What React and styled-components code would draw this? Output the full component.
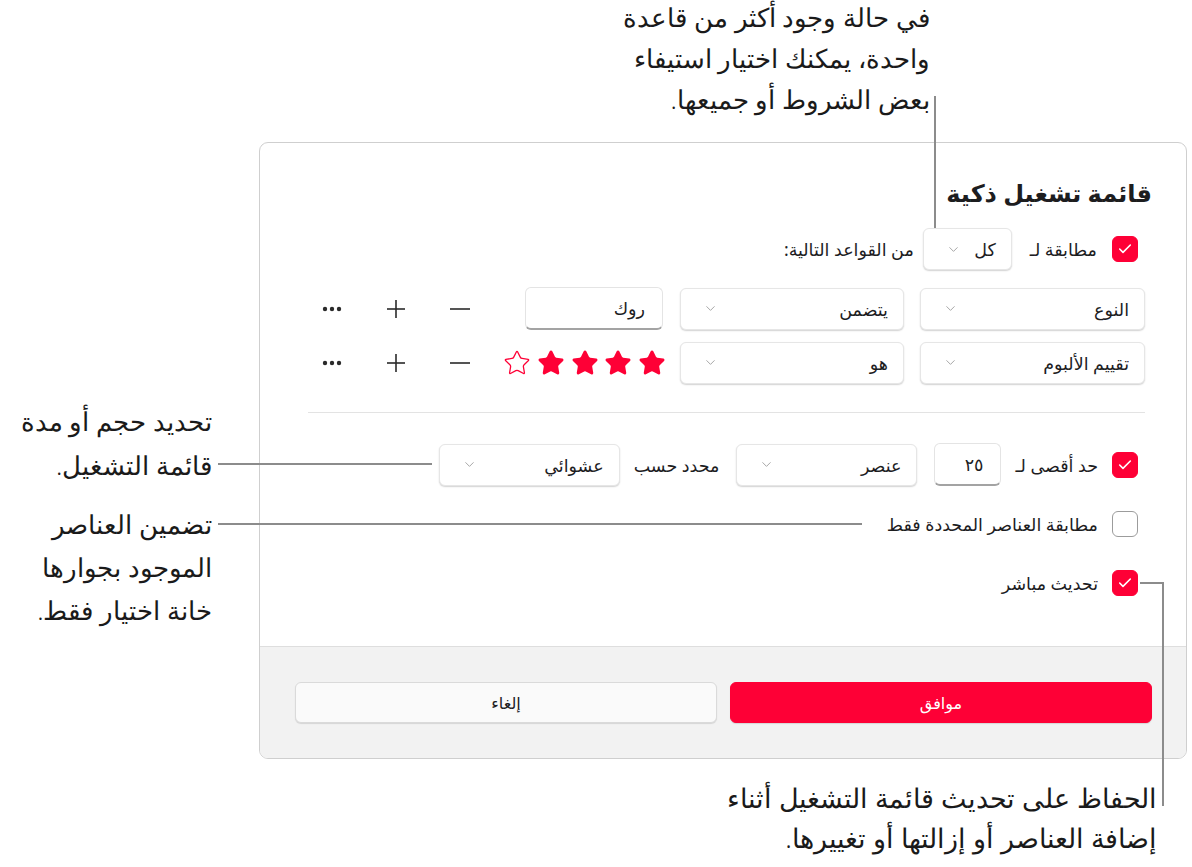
import styled, { createGlobalStyle } from "styled-components";
import { ChevronDown, Check, Star } from "lucide-react";

const GlobalStyle = createGlobalStyle`
  html, body {
    margin: 0;
    padding: 0;
    background: #ffffff;
  }
  body {
    font-family: "Noto Sans", "DejaVu Sans", sans-serif;
    color: #1d1d1f;
  }
`;

const RED = "#fe0036";

const Page = styled.div`
  position: relative;
  width: 1192px;
  height: 867px;
  overflow: hidden;
  padding-top: 142px;
  box-sizing: border-box;
`;

const Dialog = styled.div`
  direction: rtl;
  margin-left: 259px;
  width: 928px;
  height: 617px;
  box-sizing: border-box;
  border: 1px solid #cfcfcf;
  border-radius: 9px;
  background: #fff;
  display: flex;
  flex-direction: column;
  overflow: hidden;
`;

const Body = styled.div`
  flex: 1;
  padding: 34px 34px 0 48px;
  display: flex;
  flex-direction: column;
`;

const Title = styled.h1`
  margin: 0;
  font-size: 24px;
  line-height: 32px;
  font-weight: 700;
  color: #1d1d1f;
`;

const Row = styled.div`
  display: flex;
  align-items: center;
  height: ${({ h }) => h || 43}px;
  margin-top: ${({ mt }) => mt || 0}px;
  padding-right: ${({ pr }) => pr || 0}px;
`;

const Box = styled.span`
  width: 26px;
  height: 26px;
  box-sizing: border-box;
  border-radius: 6px;
  display: inline-flex;
  align-items: center;
  justify-content: center;
  flex-shrink: 0;
  background: ${({ checked }) => (checked ? RED : "#fff")};
  border: 1px solid ${({ checked }) => (checked ? RED : "#9c9c9c")};
`;

const Label = styled.span`
  font-size: 17.5px;
  color: #1d1d1f;
  white-space: nowrap;
  margin-right: ${({ mr }) => mr || 0}px;
`;

const Select = styled.div`
  width: ${({ w }) => w}px;
  height: ${({ h }) => h || 42}px;
  box-sizing: border-box;
  margin-right: ${({ mr }) => mr || 0}px;
  background: #fff;
  border: 1px solid #e6e6e6;
  border-radius: 6px;
  box-shadow: 0 1px 1.5px rgba(0, 0, 0, 0.18);
  display: flex;
  align-items: center;
  justify-content: space-between;
  padding: 0 15px 0 22px;
  font-size: 17.5px;
  color: #1d1d1f;
  flex-shrink: 0;
  svg {
    color: #9a9a9a;
  }
`;

const Field = styled.div`
  width: ${({ w }) => w}px;
  height: 43px;
  box-sizing: border-box;
  margin-right: ${({ mr }) => mr || 0}px;
  background: #fff;
  border: 1px solid #e4e4e4;
  border-bottom: 2px solid #a3a3a3;
  border-radius: 6px;
  display: flex;
  align-items: center;
  padding: 0 17px;
  font-size: 17.5px;
  color: #1d1d1f;
  flex-shrink: 0;
`;

const Stars = styled.div`
  width: 141px;
  margin-right: 14px;
  display: flex;
  gap: 5.7px;
  align-items: center;
  flex-shrink: 0;
  svg {
    flex-shrink: 0;
  }
`;

const Actions = styled.div`
  display: flex;
  align-items: center;
  gap: 24px;
  margin-right: 45px;
`;

const IconButton = styled.span`
  width: 40px;
  height: 40px;
  display: inline-flex;
  align-items: center;
  justify-content: center;
  color: #2a2a2a;
`;

const Divider = styled.div`
  height: 1px;
  background: #e3e3e3;
  margin: 28px 7px 0 0;
`;

const Footer = styled.div`
  height: 112px;
  box-sizing: border-box;
  background: #f2f2f2;
  border-top: 1px solid #dedede;
  display: flex;
  align-items: center;
  gap: 13px;
  padding: 0 34px 0 35px;
`;

const Button = styled.div`
  flex: 1;
  height: 41px;
  box-sizing: border-box;
  border-radius: 6px;
  display: flex;
  align-items: center;
  justify-content: center;
  font-size: 16px;
  background: ${({ primary }) => (primary ? RED : "#fafafa")};
  color: ${({ primary }) => (primary ? "#fff" : "#1d1d1f")};
  border: 1px solid ${({ primary }) => (primary ? RED : "#dadada")};
  box-shadow: 0 1px 1px rgba(0, 0, 0, 0.12);
`;

const Note = styled.div`
  position: absolute;
  direction: rtl;
  text-align: right;
  right: ${({ right }) => right}px;
  top: ${({ top }) => top}px;
  font-size: ${({ fs }) => fs || 26}px;
  line-height: ${({ lh }) => lh || 41}px;
  color: #1a1a1a;
  white-space: nowrap;
  font-weight: 300;
`;

const Line = styled.div`
  position: absolute;
  background: #8c8c8c;
  left: ${({ x }) => x}px;
  top: ${({ y }) => y}px;
  width: ${({ w }) => w}px;
  height: ${({ h }) => h}px;
`;

function CheckBox({ checked }) {
  return (
    <Box checked={checked}>
      {checked && <Check size={16} color="#fff" strokeWidth={2.4} />}
    </Box>
  );
}

function Dropdown({ w, mr, children }) {
  return (
    <Select w={w} mr={mr}>
      <span>{children}</span>
      <ChevronDown size={15} strokeWidth={1.4} />
    </Select>
  );
}

function MinusIcon() {
  return (
    <svg width="24" height="24" viewBox="0 0 24 24">
      <line x1="2" y1="12" x2="22" y2="12" stroke="currentColor" strokeWidth="1.6" />
    </svg>
  );
}

function PlusIcon() {
  return (
    <svg width="24" height="24" viewBox="0 0 24 24">
      <line x1="3" y1="12" x2="21" y2="12" stroke="currentColor" strokeWidth="1.6" />
      <line x1="12" y1="3" x2="12" y2="21" stroke="currentColor" strokeWidth="1.6" />
    </svg>
  );
}

function DotsIcon() {
  return (
    <svg width="24" height="24" viewBox="0 0 24 24">
      <circle cx="5" cy="12" r="2.2" fill="currentColor" />
      <circle cx="12" cy="12" r="2.2" fill="currentColor" />
      <circle cx="19" cy="12" r="2.2" fill="currentColor" />
    </svg>
  );
}

function RowActions() {
  return (
    <Actions>
      <IconButton><MinusIcon /></IconButton>
      <IconButton><PlusIcon /></IconButton>
      <IconButton><DotsIcon /></IconButton>
    </Actions>
  );
}

export default function App() {
  const rating = 4;
  return (
    <Page>
      <GlobalStyle />
      <Dialog>
        <Body>
          <Title>قائمة تشغيل ذكية</Title>

          <Row h={42} mt={19} pr={14}>
            <CheckBox checked />
            <Label mr={15}>مطابقة لـ</Label>
            <Dropdown w={89} mr={18}>كل</Dropdown>
            <Label mr={9}>من القواعد التالية:</Label>
          </Row>

          <Row mt={17} pr={7}>
            <Dropdown w={225}>النوع</Dropdown>
            <Dropdown w={224} mr={16}>يتضمن</Dropdown>
            <Field w={138} mr={17}>روك</Field>
            <RowActions />
          </Row>

          <Row mt={11} pr={7}>
            <Dropdown w={225}>تقييم الألبوم</Dropdown>
            <Dropdown w={224} mr={16}>هو</Dropdown>
            <Stars>
              {[0, 1, 2, 3, 4].map((i) => (
                <Star
                  key={i}
                  size={28}
                  color={RED}
                  fill={i < rating ? RED : "none"}
                  strokeWidth={i < rating ? 1.4 : 1.1}
                />
              ))}
            </Stars>
            <RowActions />
          </Row>

          <Divider />

          <Row mt={30} pr={14}>
            <CheckBox checked />
            <Label mr={14}>حد أقصى لـ</Label>
            <Field w={67} mr={14}>٢٥</Field>
            <Dropdown w={181} mr={17}>عنصر</Dropdown>
            <Label mr={17}>محدد حسب</Label>
            <Dropdown w={181} mr={14}>عشوائي</Dropdown>
          </Row>

          <Row h={26} mt={25} pr={14}>
            <CheckBox />
            <Label mr={14}>مطابقة العناصر المحددة فقط</Label>
          </Row>

          <Row h={26} mt={33} pr={14}>
            <CheckBox checked />
            <Label mr={14}>تحديث مباشر</Label>
          </Row>
        </Body>
        <Footer>
          <Button primary>موافق</Button>
          <Button>إلغاء</Button>
        </Footer>
      </Dialog>

      <Note right={262} top={-3}>
        في حالة وجود أكثر من قاعدة
        <br />
        واحدة، يمكنك اختيار استيفاء
        <br />
        بعض الشروط أو جميعها.
      </Note>
      <Line x={934} y={96} w={2} h={132} />

      <Note right={980} top={399} lh={44}>
        تحديد حجم أو مدة
        <br />
        قائمة التشغيل.
      </Note>
      <Line x={218} y={463} w={214} h={2} />

      <Note right={980} top={503} lh={43}>
        تضمين العناصر
        <br />
        الموجود بجوارها
        <br />
        خانة اختيار فقط.
      </Note>
      <Line x={218} y={523} w={644} h={2} />

      <Note right={35} top={778} lh={40} fs={27}>
        الحفاظ على تحديث قائمة التشغيل أثناء
        <br />
        إضافة العناصر أو إزالتها أو تغييرها.
      </Note>
      <Line x={1140} y={582} w={24} h={2} />
      <Line x={1162} y={582} w={2} h={224} />
    </Page>
  );
}
